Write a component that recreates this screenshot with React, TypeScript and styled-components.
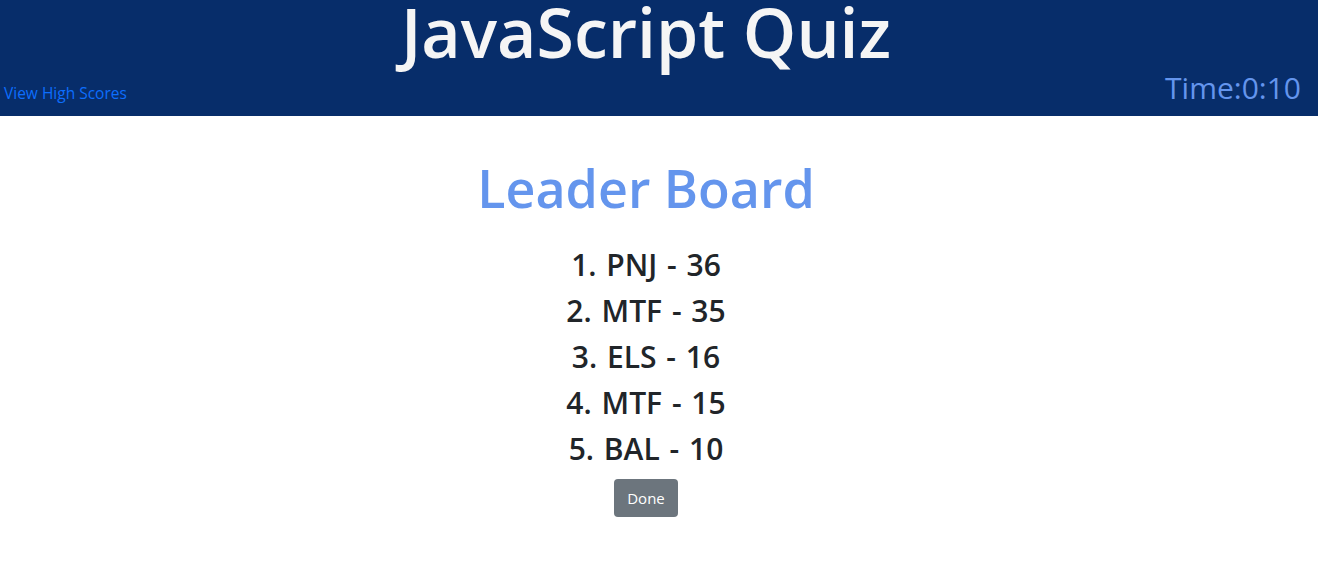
import styled, { createGlobalStyle } from "styled-components";

const GlobalStyle = createGlobalStyle`
  body {
    margin: 0;
    font-family: "Open Sans", "Noto Sans", sans-serif;
    color: #212529;
    background: #fff;
  }
`;

const Header = styled.header`
  background: #072d6a;
  height: 116px;
  display: flex;
  flex-direction: column;
  justify-content: space-between;
`;

const Title = styled.h1`
  margin: 0 26px 0 0;
  text-align: center;
  color: #f5f5f5;
  font-size: 68px;
  font-weight: 600;
  line-height: 64px;
`;

const Bar = styled.div`
  display: flex;
  justify-content: space-between;
  align-items: baseline;
  padding: 0 17px 11px 4px;
`;

const Link = styled.a`
  color: #0d6efd;
  font-size: 15.5px;
  text-decoration: none;
`;

const Timer = styled.div`
  color: #6495ed;
  font-size: 30px;
  line-height: 34px;
`;

const Main = styled.main`
  display: flex;
  flex-direction: column;
  align-items: center;
  padding: 34px 26px 0 0;
`;

const Heading = styled.h2`
  margin: 0 0 16px;
  color: #6495ed;
  font-size: 52px;
  font-weight: 600;
  line-height: 76px;
`;

const Scores = styled.ol`
  list-style: none;
  margin: 0;
  padding: 0;
  text-align: center;
`;

const Score = styled.li`
  font-size: 30px;
  font-weight: 600;
  line-height: 46px;
  word-spacing: 2px;
`;

const Button = styled.button`
  margin-top: 7px;
  background: #6c757d;
  color: #fff;
  border: none;
  border-radius: 4px;
  width: 64px;
  height: 38px;
  font-family: inherit;
  font-size: 15px;
  cursor: pointer;
`;

const scores = [
  { name: "PNJ", score: 36 },
  { name: "MTF", score: 35 },
  { name: "ELS", score: 16 },
  { name: "MTF", score: 15 },
  { name: "BAL", score: 10 },
];

export default function App() {
  return (
    <>
      <GlobalStyle />
      <Header>
        <Title>JavaScript Quiz</Title>
        <Bar>
          <Link href="#">View High Scores</Link>
          <Timer>Time:0:10</Timer>
        </Bar>
      </Header>
      <Main>
        <Heading>Leader Board</Heading>
        <Scores>
          {scores.map((s, i) => (
            <Score key={i}>
              {i + 1}. {s.name} - {s.score}
            </Score>
          ))}
        </Scores>
        <Button>Done</Button>
      </Main>
    </>
  );
}
